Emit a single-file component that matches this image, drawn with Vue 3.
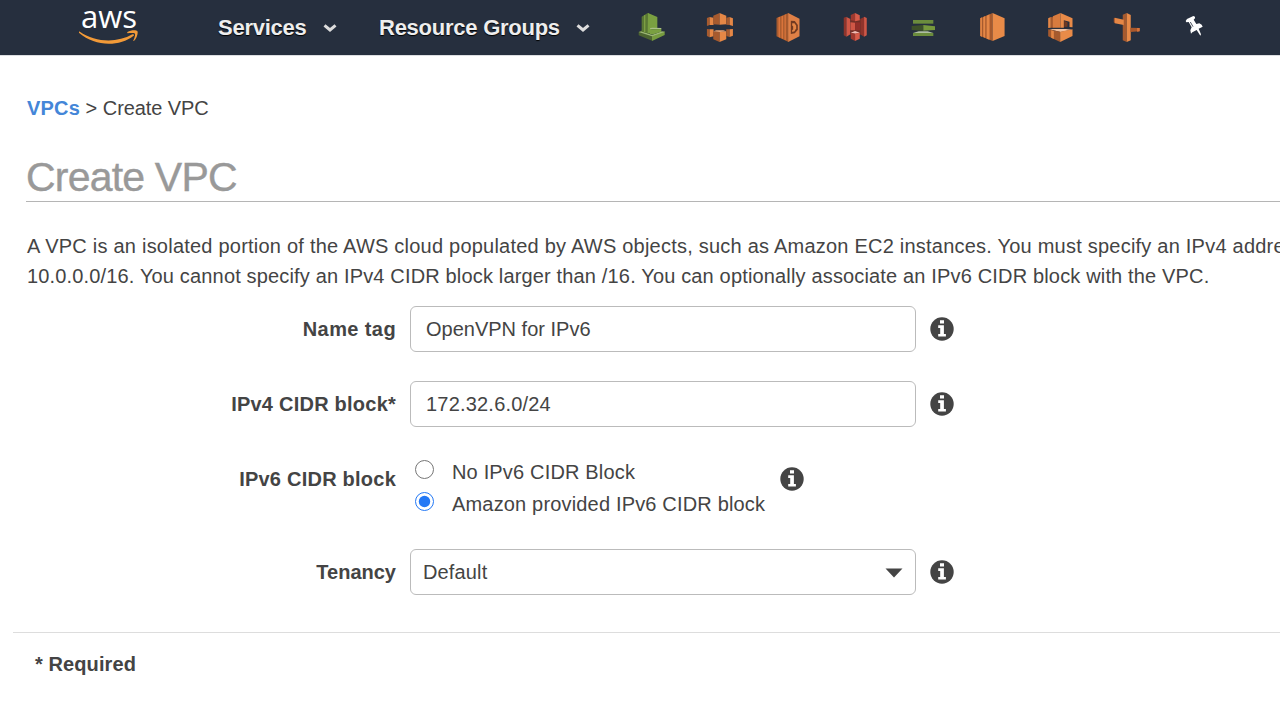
<script setup>
import { ref } from 'vue'

const nameTag = ref('OpenVPN for IPv6')
const cidr = ref('172.32.6.0/24')
const ipv6 = ref('amazon')

// service shortcuts, each one a list of [fill, polygon points]
const shortcuts = [
  {
    name: 'config',
    box: '24 39 84 90',
    shapes: [
      ['#4c6430', '26,96 38,90 66,106 66,122 26,106'],
      ['#769b3f', '66,106 104,94 104,105 66,123'],
      ['#9db777', '26,96 36,94 66,105 96,94 104,96 66,109'],
      ['#5a7834', '35,50 53,39 57,41 57,101 35,95'],
      ['#7d9f43', '42,46 46,44 46,97 42,96'],
      ['#7aa041', '54,39 82,51 82,86 64,86 64,102 53,99'],
      ['#a9c086', '60,85 66,83 94,84 94,87 60,88'],
      ['#7aa041', '60,88 94,87 94,95 66,104 60,102']
    ]
  },
  {
    name: 'cloudfront',
    box: '227.25 39 84 90',
    shapes: [
      ['#a65a2e', '230,54 238,51 238,75 230,78'],
      ['#e58746', '238,51 250,53 250,75 238,75'],
      ['#a65a2e', '249,47 268,39 268,74 249,73'],
      ['#e58746', '268,39 288,47 288,73 268,74'],
      ['#a65a2e', '288,53 298,51 298,75 288,74'],
      ['#e58746', '298,51 308,55 308,78 298,75'],
      ['#a65a2e', '230,87 238,88 238,112 230,108'],
      ['#e58746', '238,88 250,88 250,109 238,112'],
      ['#a65a2e', '249,94 268,95 268,126 249,118'],
      ['#e58746', '268,95 288,94 288,118 268,126'],
      ['#e9a576', '249,94 258,91 279,91 288,94 268,96'],
      ['#a65a2e', '288,88 298,88 298,111 288,108'],
      ['#e58746', '298,88 308,87 308,107 298,111']
    ]
  },
  {
    name: 'dynamo',
    box: '430.5 39 84 90',
    shapes: [
      ['#a65a2e', '438,54 474,39 474,126 438,109'],
      ['#d9743b', '444,52 449,50 449,113 444,111'],
      ['#d9743b', '453,49 458,47 458,117 453,115'],
      ['#d9743b', '462,45 466,43 466,121 462,119'],
      ['#df8046', '473,39 507,56 507,109 473,126'],
      ['#713a21', '481,62 493,63 502,75 502,89 493,100 481,102'],
      ['#e58746', '485,70 492,70 497,77 497,85 492,94 485,96'],
      ['#713a21', '483,76 488,79 488,89 483,90']
    ]
  },
  {
    name: 's3',
    box: '33.75 39 84 90',
    shapes: [
      ['#8f342b', '42,53 50,50 50,110 42,106'],
      ['#d05746', '50,51 62,57 62,103 50,110'],
      ['#8f342b', '91,57 103,51 103,110 91,103'],
      ['#d05746', '103,50 111,54 111,106 103,110'],
      ['#713028', '62,56 92,56 92,105 62,105'],
      ['#9e392f', '63,45 76,39 76,63 63,61'],
      ['#d85c4a', '76,39 90,46 90,61 76,64'],
      ['#d05746', '62,67 76,68 76,91 62,91'],
      ['#922f29', '76,67 91,67 91,91 76,91'],
      ['#f2bdb5', '63,98 76,93 90,98 76,101'],
      ['#9e392f', '63,98 76,101 76,123 63,116'],
      ['#d85c4a', '76,101 90,98 90,116 76,123']
    ]
  },
  {
    name: 'elasticache',
    box: '237 39 84 90',
    shapes: [
      ['#6b8c3d', '249,60 310,60 310,71 249,71'],
      ['#3d5129', '245,78 280,75 280,93 245,90'],
      ['#76983c', '280,75 315,79 315,90 280,92'],
      ['#aebfa0', '249,99 266,94 293,94 310,99'],
      ['#6b8c3d', '249,99 310,99 310,108 249,108']
    ]
  },
  {
    name: 'ec2',
    box: '440.25 39 84 90',
    shapes: [
      ['#a65a2e', '450,55 487,39 487,123 450,108'],
      ['#e58746', '450,55 455,52 455,110 450,108'],
      ['#e58746', '459,51 465,48 465,114 459,111'],
      ['#e58746', '469,47 478,43 478,119 469,116'],
      ['#e98b48', '487,39 523,55 523,108 487,123']
    ]
  },
  {
    name: 'emr',
    box: '43.5 39 84 90',
    shapes: [
      ['#e58746', '53,55 61,51 61,83 53,84'],
      ['#a65a2e', '61,51 68,52 68,83 61,83'],
      ['#d87b3e', '67,49 90,39 90,83 67,83'],
      ['#e98b48', '90,39 126,55 126,82 117,81 117,65 100,61 100,83 90,83'],
      ['#713a21', '101,62 111,67 111,80 101,81'],
      ['#f3c3a2', '56,88 74,87 106,87 123,89 90,96'],
      ['#a65a2e', '53,88 89,95 89,126 53,109'],
      ['#e58746', '62,91 70,93 70,117 62,113'],
      ['#e98b48', '89,95 126,88 126,108 89,126']
    ]
  },
  {
    name: 'route',
    box: '246.75 39 84 90',
    shapes: [
      ['#a65a2e', '279,44 291,39 291,126 279,121'],
      ['#e98b48', '291,39 303,45 303,121 291,126'],
      ['#9c522c', '252,55 256,53 256,70 252,67'],
      ['#e58746', '255,53 282,59 282,75 255,70'],
      ['#a9582c', '302,83 329,84 329,94 302,96'],
      ['#d9743b', '322,84 330,84 330,94 322,95']
    ]
  }
]
</script>

<template>
  <header>
    <div class="logo">
      <span>aws</span>
      <svg width="60" height="15" viewBox="0 0 60 15">
        <path d="M.5 1.500C17 12.800 38 13 53.500 4.300c1.200-.600 2.100.600 1.100 1.500C40 17.200 16 16.700.2 3.100-.3 2.300 0 1.200.5 1.500z" fill="#f29a38" />
        <path d="M48.500 1.900c3-2 8.500-2.200 9.800-1 1.200 1.500-.5 7.700-3.400 10.100-.6.300-.8 0-.5-.6.900-2 2.200-5.700 1.500-6.700-.8-1-4.900-.7-7.100-.5-.7 0-.9-.8-.3-1.300z" fill="#f29a38" />
      </svg>
    </div>
    <nav>
      <a class="services">Services
        <svg width="14" height="9" viewBox="0 0 14 9"><path d="M1.500 2.300 7 7l5.500-4.700" /></svg>
      </a>
      <a class="groups">Resource Groups
        <svg width="14" height="9" viewBox="0 0 14 9"><path d="M1.500 2.300 7 7l5.500-4.700" /></svg>
      </a>
    </nav>
    <div class="shortcuts">
      <svg v-for="item in shortcuts" :key="item.name" width="28" height="30" :viewBox="item.box">
        <polygon v-for="([fill, points], i) in item.shapes" :key="i" :fill="fill" :points="points" />
      </svg>
      <!-- pin -->
      <svg width="28" height="30" viewBox="450 39 84 90">
        <path d="M467 63l4-6 19-9 5 2v5l-4 4 8 13 9-2 7 4 3 6-12 6 7 17-2 4-11-17-13 7-4 4-2-10 4-9-9-16-7 1z" fill="#fff" />
        <path d="M481 66l8 14" stroke="#262f3e" stroke-width="2.500" />
      </svg>
    </div>
  </header>

  <main>
    <div class="breadcrumb"><a>VPCs</a> &gt; <span>Create VPC</span></div>
    <h1>Create VPC</h1>
    <p class="intro">
      <span class="line1">A VPC is an isolated portion of the AWS cloud populated by AWS objects, such as Amazon EC2 instances. You must specify an IPv4 address</span><br>
      <span class="line2">10.0.0.0/16. You cannot specify an IPv4 CIDR block larger than /16. You can optionally associate an IPv6 CIDR block with the VPC.</span>
    </p>

    <form @submit.prevent>
      <div class="row">
        <label class="name tag">Name tag</label>
        <input v-model="nameTag" class="field" type="text">
        <svg class="info" viewBox="0 0 24 24"><circle cx="12" cy="12" r="11.700" /><path d="M10 3.200h4v3.200h-4zM8.200 8.300h5.700v8.600h2v2.700H8.200v-2.700h2V11h-2z" /></svg>
      </div>
      <div class="row">
        <label class="name">IPv4 CIDR block*</label>
        <input v-model="cidr" class="field cidr" type="text">
        <svg class="info" viewBox="0 0 24 24"><circle cx="12" cy="12" r="11.700" /><path d="M10 3.200h4v3.200h-4zM8.200 8.300h5.700v8.600h2v2.700H8.200v-2.700h2V11h-2z" /></svg>
      </div>
      <div class="row radios">
        <label class="name">IPv6 CIDR block</label>
        <div class="options">
          <label><input v-model="ipv6" type="radio" value="none"><span>No IPv6 CIDR Block</span></label>
          <label><input v-model="ipv6" type="radio" value="amazon"><span>Amazon provided IPv6 CIDR block</span></label>
        </div>
        <svg class="info" viewBox="0 0 24 24"><circle cx="12" cy="12" r="11.700" /><path d="M10 3.200h4v3.200h-4zM8.200 8.300h5.700v8.600h2v2.700H8.200v-2.700h2V11h-2z" /></svg>
      </div>
      <div class="row">
        <label class="name tenancy">Tenancy</label>
        <div class="field select">
          <span>Default</span>
          <svg width="18" height="10" viewBox="0 0 18 10"><path d="M.5.500h17L9 9.500z" fill="#444" /></svg>
        </div>
        <svg class="info" viewBox="0 0 24 24"><circle cx="12" cy="12" r="11.700" /><path d="M10 3.200h4v3.200h-4zM8.200 8.300h5.700v8.600h2v2.700H8.200v-2.700h2V11h-2z" /></svg>
      </div>
    </form>

    <footer>* Required</footer>
  </main>
</template>

<style>
body {
  background: #fff;
  overflow: hidden;
}

#app {
  font-family: "Liberation Sans", Arial, sans-serif;
  font-size: 20px;
  line-height: 30px;
  color: #444;
}
</style>

<style scoped>
header {
  display: flex;
  box-sizing: border-box;
  height: 56px;
  background: #262f3e;
  border-bottom: 1px solid #dcdee1;
}

.logo {
  display: flex;
  flex-direction: column;
  width: 60px;
  margin-left: 79px;
}

.logo span {
  height: 30px;
  padding-left: 2px;
  font: 500 31px/32px "Open Sans", "Noto Sans", sans-serif;
  color: #fff;
}

.logo svg {
  flex: none;
}

nav {
  display: flex;
  width: 499px;
  line-height: 55px;
  font-size: 22px;
  font-weight: bold;
  letter-spacing: -0.25px;
  color: #eee;
  white-space: nowrap;
}

nav a {
  display: flex;
  align-items: center;
  justify-content: space-between;
  text-shadow: 0 1px 1px #000;
}

nav svg {
  fill: none;
  stroke: #ddd;
  stroke-width: 3;
}

.services {
  width: 119px;
  margin-left: 79px;
}

.groups {
  width: 211px;
  margin-left: 42px;
}

.shortcuts {
  display: flex;
  gap: 39.75px;
  padding-top: 13px;
}

.shortcuts svg {
  flex: none;
}

main {
  padding-left: 27px;
}

.breadcrumb {
  padding-top: 37px;
}

.breadcrumb a {
  font-weight: bold;
  letter-spacing: 0.2px;
  color: #4486d8;
}

.breadcrumb span {
  letter-spacing: -0.1px;
}

h1 {
  height: 48px;
  margin: 30px 0 0 -1px;
  border-bottom: 1px solid #b5b5b5;
  font-size: 41px;
  line-height: 48px;
  font-weight: normal;
  letter-spacing: -0.8px;
  color: #999;
  -webkit-text-stroke: 0.4px #999;
}

.intro {
  margin: 29px 0 0;
  white-space: nowrap;
}

.line1 {
  letter-spacing: 0.225px;
}

.line2 {
  letter-spacing: 0.16px;
}

.row {
  display: flex;
  align-items: center;
  height: 46px;
  margin-bottom: 29px;
}

form {
  padding-top: 15px;
}

.name {
  width: 369px;
  margin-right: 14px;
  font-weight: bold;
  letter-spacing: 0.23px;
  text-align: right;
}

.tag {
  letter-spacing: 0.4px;
}

.tenancy {
  letter-spacing: 0;
}

.field {
  box-sizing: border-box;
  width: 506px;
  height: 46px;
  padding: 0 15px;
  border: 1px solid #bbb;
  border-radius: 6px;
  background: #fff;
  font: inherit;
  color: #444;
}

.cidr {
  letter-spacing: 0.2px;
}

.select {
  display: flex;
  align-items: center;
  justify-content: space-between;
  padding: 0 12px;
  letter-spacing: 0.15px;
}

.select svg {
  margin-top: 2px;
}

.info {
  width: 24px;
  height: 24px;
  margin-left: 14px;
  fill: #444;
}

.info path {
  fill: #fff;
}

.radios {
  margin-bottom: 47px;
}

.options {
  display: flex;
  flex-direction: column;
  width: 356px;
  margin-top: 18px;
  letter-spacing: 0.17px;
}

.options label {
  display: flex;
  height: 32px;
  line-height: 32px;
}

.options input {
  width: 19px;
  height: 19px;
  margin: 4px 18px 0 5px;
  accent-color: #2378f5;
}

footer {
  margin: 37px 0 0 -14px;
  padding: 16px 0 0 22px;
  border-top: 1px solid #ddd;
  font-weight: bold;
  letter-spacing: 0.1px;
}
</style>
